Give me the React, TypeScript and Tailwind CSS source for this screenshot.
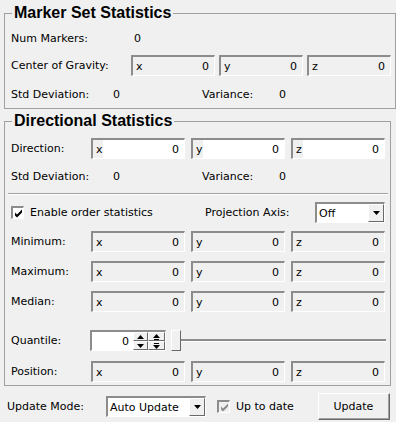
import React from "react";

const FONT = "font-['DejaVu_Sans',sans-serif]";

function Sunken({
  className,
  children,
}: {
  className: string;
  children?: React.ReactNode;
}) {
  return (
    <div
      className={`flex border-t-2 border-l-2 border-t-[#8c8c8c] border-l-[#8c8c8c] border-b border-r border-b-white border-r-white ${className}`}
    >
      {children}
    </div>
  );
}

function VecField({
  axis,
  value = "0",
  editable,
  w,
}: {
  axis: string;
  value?: string;
  editable?: boolean;
  w: string;
}) {
  return (
    <Sunken className={`h-[21px] items-stretch ${w} ${editable ? "bg-white" : "bg-[#f0f0f0]"}`}>
      <span className="flex w-[10px] items-center bg-[#f0f0f0] pl-[3px] leading-none">
        {axis}
      </span>
      <span className="flex flex-1 items-center justify-end pr-[5px] leading-none">
        {value}
      </span>
    </Sunken>
  );
}

function Raised({
  className,
  children,
}: {
  className: string;
  children?: React.ReactNode;
}) {
  return (
    <div
      className={`flex items-center justify-center border border-t-white border-l-white border-b-[#696969] border-r-[#696969] bg-[#f0f0f0] ${className}`}
    >
      {children}
    </div>
  );
}

function DownArrow() {
  return (
    <svg width="7" height="4" viewBox="0 0 7 4">
      <path d="M0 0h7L3.5 4z" fill="#000" />
    </svg>
  );
}

function Combo({ value, w }: { value: string; w: string }) {
  return (
    <Sunken className={`h-[21px] items-stretch bg-white ${w}`}>
      <span className="flex flex-1 items-center pl-[2px] leading-none">{value}</span>
      <Raised className="w-[16px]">
        <DownArrow />
      </Raised>
    </Sunken>
  );
}

function Check({ disabled }: { disabled?: boolean }) {
  return (
    <Sunken className={`h-[13px] w-[13px] items-center justify-center ${disabled ? "bg-[#f0f0f0]" : "bg-white"}`}>
      <svg width="9" height="9" viewBox="0 0 9 9">
        <path
          d="M1 3.5l2 2 5-5v3L3 8.5 1 6.5z"
          fill={disabled ? "#8d8d8d" : "#000"}
        />
      </svg>
    </Sunken>
  );
}

function Vec3({ editable, w }: { editable?: boolean; w: string }) {
  return (
    <>
      <VecField axis="x" editable={editable} w={w} />
      <VecField axis="y" editable={editable} w={w} />
      <VecField axis="z" editable={editable} w={w} />
    </>
  );
}

function StdRow() {
  return (
    <div className="flex h-[21px] items-center">
      <span className="w-[102px]">Std Deviation:</span>
      <span className="w-[89px]">0</span>
      <span className="w-[77px]">Variance:</span>
      <span>0</span>
    </div>
  );
}

function VecRow({ label, editable }: { label: string; editable?: boolean }) {
  return (
    <div className="flex h-[21px] items-center gap-[6px]">
      <span className="w-[74px]">{label}</span>
      <Vec3 editable={editable} w="w-[94px]" />
    </div>
  );
}

export default function App() {
  return (
    <div className={`h-[422px] w-[396px] overflow-hidden bg-[#f0f0f0] pt-[4px] text-[11px] leading-[13px] text-black ${FONT}`}>
      <fieldset className="ml-[4px] h-[105px] w-[387px] border border-[#a0a0a0] pl-[6px] pr-[4px]">
        <legend className="ml-[1px] px-[2px] font-['Liberation_Sans',sans-serif] text-[16px] leading-[18px] font-bold">
          Marker Set Statistics
        </legend>
        <div className="flex flex-col pt-[6px]">
          <div className="flex h-[21px] items-center">
            <span className="w-[123px]">Num Markers:</span>
            <span>0</span>
          </div>
          <div className="mt-[6px] flex h-[21px] items-center">
            <span className="w-[120px]">Center of Gravity:</span>
            <div className="flex gap-[4px]">
              <Vec3 w="w-[84px]" />
            </div>
          </div>
          <div className="mt-[8px]">
            <StdRow />
          </div>
        </div>
      </fieldset>

      <fieldset className="mt-[3px] ml-[4px] w-[387px] border border-[#a0a0a0] pl-[6px] pr-[4px] pb-[3px]">
        <legend className="ml-[1px] px-[2px] font-['Liberation_Sans',sans-serif] text-[16px] leading-[18px] font-bold">
          Directional Statistics
        </legend>
        <div className="mt-[8px]">
          <VecRow label="Direction:" editable />
        </div>
        <div className="mt-[7px]">
          <StdRow />
        </div>
        <div className="mt-[6px] -mr-[2px] -ml-[3px] h-[2px] border-t border-b border-t-[#a0a0a0] border-b-white" />
        <div className="mt-[7px] flex h-[21px] items-center">
          <Check />
          <span className="ml-[6px] w-[175px]">Enable order statistics</span>
          <span className="w-[110px]">Projection Axis:</span>
          <Combo value="Off" w="w-[70px]" />
        </div>
        <div className="mt-[8px]">
          <VecRow label="Minimum:" />
        </div>
        <div className="mt-[9px]">
          <VecRow label="Maximum:" />
        </div>
        <div className="mt-[9px]">
          <VecRow label="Median:" />
        </div>
        <div className="mt-[18px] flex h-[21px] items-center">
          <span className="w-[79px]">Quantile:</span>
          <Sunken className="h-[21px] w-[76px] items-stretch bg-white">
            <span className="flex w-[37px] items-center justify-end leading-none">0</span>
            <div className="ml-[4px] flex w-[15px] flex-col">
              <Raised className="h-[9px]">
                <svg width="7" height="4" viewBox="0 0 7 4">
                  <path d="M0 4h7L3.5 0z" fill="#000" />
                </svg>
              </Raised>
              <Raised className="h-[9px]">
                <DownArrow />
              </Raised>
            </div>
            <div className="flex w-[17px] flex-col">
              <Raised className="h-[9px] flex-col gap-[1px]">
                <svg width="7" height="6" viewBox="0 0 7 6">
                  <path d="M0 4h7L3.5 0z M1 5h5v1H1z" fill="#000" />
                </svg>
              </Raised>
              <Raised className="h-[9px]">
                <svg width="7" height="6" viewBox="0 0 7 6">
                  <path d="M1 0h5v1H1z M0 2h7L3.5 6z" fill="#000" />
                </svg>
              </Raised>
            </div>
          </Sunken>
          <div className="ml-[5px] flex flex-1 items-center">
            <Raised className="h-[21px] w-[10px] border-b-[#696969]" />
            <div className="h-[3px] flex-1 border-t-2 border-b border-t-[#8c8c8c] border-b-white" />
          </div>
        </div>
        <div className="mt-[10px]">
          <VecRow label="Position:" />
        </div>
      </fieldset>

      <div className="mt-[7px] flex h-[27px] items-center pl-[7px]">
        <span className="w-[99px]">Update Mode:</span>
        <Combo value="Auto Update" w="w-[100px]" />
        <div className="ml-[11px] flex items-center">
          <Check disabled />
          <span className="ml-[6px]">Up to date</span>
        </div>
        <div className="ml-[24px] flex h-[27px] w-[72px] border border-t-white border-l-white border-b-[#696969] border-r-[#696969]">
          <div className="flex flex-1 items-center justify-center border-b border-r border-b-[#a0a0a0] border-r-[#a0a0a0]">
            Update
          </div>
        </div>
      </div>
    </div>
  );
}
